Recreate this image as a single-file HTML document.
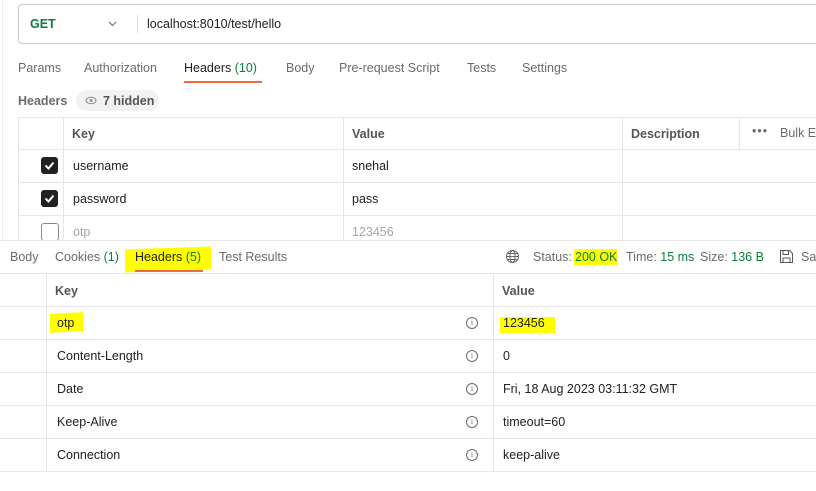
<!DOCTYPE html><html><head><style>
*{margin:0;padding:0;box-sizing:border-box}
body{width:816px;height:491px;overflow:hidden;background:#fff;font-family:"Liberation Sans",sans-serif;font-size:12.5px;color:#212121;position:relative}
.a{position:absolute;white-space:nowrap}
.g{color:#6b6b6b}
.hl{position:absolute;background:#ffff00}
.hline{position:absolute;height:1px;background:#e6e6e6}
.vline{position:absolute;width:1px;background:#e6e6e6}
.cb{position:absolute;width:17px;height:17px;border-radius:3px;background:#212121}
.cb svg{position:absolute;left:2px;top:2px}
.info{position:absolute;width:12px;height:12px;border:1px solid #6b6b6b;border-radius:50%;font-size:8px;text-align:center;line-height:10px;color:#6b6b6b;font-family:"Liberation Serif",serif}
</style></head><body>
<div class="vline" style="left:2px;top:0;height:491px;background:#ececec"></div>
<div class="a" style="left:18px;top:4px;width:820px;height:40px;border:1px solid #c8c8c8;border-radius:4px"></div>
<div class="a" style="left:30px;top:17px;color:#0a7f3a;font-weight:bold">GET</div>
<svg class="a" style="left:108px;top:21px" width="9" height="6"><path d="M1 1L4.5 4.5L8 1" stroke="#6b6b6b" fill="none" stroke-width="1"/></svg>
<div class="vline" style="left:137px;top:15px;height:18px;background:#ddd"></div>
<div class="a" style="left:147px;top:17px">localhost:8010/test/hello</div>

<div class="a g" style="left:18px;top:61px">Params</div>
<div class="a g" style="left:84px;top:61px">Authorization</div>
<div class="a" style="left:184px;top:61px">Headers <span style="color:#0a7f3a">(10)</span></div>
<div class="a" style="left:184px;top:81px;width:78px;height:2px;background:#f26b3a"></div>
<div class="a g" style="left:286px;top:61px">Body</div>
<div class="a g" style="left:339px;top:61px">Pre-request Script</div>
<div class="a g" style="left:467px;top:61px">Tests</div>
<div class="a g" style="left:522px;top:61px">Settings</div>

<div class="a g" style="left:18px;top:94px;font-weight:bold">Headers</div>
<div class="a" style="left:76px;top:90px;width:83px;height:21px;border-radius:11px;background:#f2f2f2"></div>
<svg class="a" style="left:85px;top:96px" width="12" height="9"><ellipse cx="6" cy="4.5" rx="5" ry="3.2" fill="none" stroke="#888"/><circle cx="6" cy="4.5" r="1.4" fill="#888"/></svg>
<div class="a g" style="left:103px;top:94px;font-weight:bold;color:#555">7 hidden</div>

<div class="hline" style="left:18px;top:117px;width:800px"></div>
<div class="hline" style="left:18px;top:149px;width:800px"></div>
<div class="hline" style="left:18px;top:182px;width:800px"></div>
<div class="hline" style="left:18px;top:215px;width:800px"></div>
<div class="vline" style="left:18px;top:117px;height:124px"></div>
<div class="vline" style="left:63px;top:117px;height:124px"></div>
<div class="vline" style="left:343px;top:117px;height:124px"></div>
<div class="vline" style="left:622px;top:117px;height:124px"></div>
<div class="vline" style="left:739px;top:117px;height:33px"></div>
<div class="a" style="left:72px;top:127px;font-weight:bold;color:#555">Key</div>
<div class="a" style="left:352px;top:127px;font-weight:bold;color:#555">Value</div>
<div class="a" style="left:631px;top:127px;font-weight:bold;color:#555">Description</div>
<div class="a g" style="left:752px;top:124px;letter-spacing:1px">•••</div>
<div class="a g" style="left:780px;top:126px">Bulk Edit</div>
<div class="cb" style="left:41px;top:157px"><svg width="13" height="13"><path d="M2.5 6.5L5.5 9.5L10.5 3.5" stroke="#fff" stroke-width="2" fill="none"/></svg></div>
<div class="cb" style="left:41px;top:190px"><svg width="13" height="13"><path d="M2.5 6.5L5.5 9.5L10.5 3.5" stroke="#fff" stroke-width="2" fill="none"/></svg></div>
<div class="a" style="left:41px;top:223px;width:18px;height:18px;border:1px solid #888;border-radius:3px"></div>
<div class="a" style="left:73px;top:159px">username</div>
<div class="a" style="left:352px;top:159px">snehal</div>
<div class="a" style="left:73px;top:192px">password</div>
<div class="a" style="left:352px;top:192px">pass</div>
<div class="a" style="left:73px;top:225px;color:#a6a6a6">otp</div>
<div class="a" style="left:352px;top:225px;color:#a6a6a6">123456</div>

<div class="a" style="left:0;top:240px;width:816px;height:251px;background:#fff;border-top:1px solid #e6e6e6"></div>
<div class="hl" style="left:125px;top:248px;width:86px;height:23px;transform:skewY(-2deg)"></div>
<div class="a g" style="left:10px;top:250px">Body</div>
<div class="a g" style="left:55px;top:250px">Cookies <span style="color:#0a7f3a">(1)</span></div>
<div class="a" style="left:135px;top:250px">Headers <span style="color:#0a7f3a">(5)</span></div>
<div class="a" style="left:135px;top:270px;width:68px;height:2px;background:#f26b3a"></div>
<div class="a g" style="left:219px;top:250px">Test Results</div>
<svg class="a" style="left:505px;top:249px" width="15" height="15"><circle cx="7.5" cy="7.5" r="6" fill="none" stroke="#666"/><ellipse cx="7.5" cy="7.5" rx="2.6" ry="6" fill="none" stroke="#666"/><path d="M1.5 7.5H13.5M2.5 4.5H12.5M2.5 10.5H12.5" stroke="#666"/></svg>
<div class="a g" style="left:533px;top:250px">Status:</div>
<div class="hl" style="left:574px;top:249px;width:43px;height:16px"></div>
<div class="a" style="left:575px;top:250px;color:#0a7f3a">200 OK</div>
<div class="a g" style="left:626px;top:250px">Time: <span style="color:#0a7f3a">15 ms</span></div>
<div class="a g" style="left:700px;top:250px">Size: <span style="color:#0a7f3a">136 B</span></div>
<svg class="a" style="left:779px;top:249px" width="15" height="15"><path d="M1.5 1.5H10.5L13.5 4.5V13.5H1.5Z M4 1.5V5.5H9.5V1.5 M4 13.5V9H11V13.5" fill="none" stroke="#555"/></svg>
<div class="a g" style="left:801px;top:250px">Save</div>

<div class="hline" style="left:0;top:273px;width:816px"></div>
<div class="hline" style="left:0;top:306px;width:816px"></div>
<div class="hline" style="left:0;top:339px;width:816px"></div>
<div class="hline" style="left:0;top:372px;width:816px"></div>
<div class="hline" style="left:0;top:405px;width:816px"></div>
<div class="hline" style="left:0;top:438px;width:816px"></div>
<div class="hline" style="left:0;top:471px;width:816px"></div>
<div class="vline" style="left:46px;top:273px;height:198px"></div>
<div class="vline" style="left:493px;top:273px;height:198px"></div>
<div class="a" style="left:55px;top:284px;font-weight:bold;color:#555">Key</div>
<div class="a" style="left:502px;top:284px;font-weight:bold;color:#555">Value</div>
<div class="hl" style="left:50px;top:313px;width:33px;height:19px;transform:skewY(-3deg)"></div>
<div class="hl" style="left:500px;top:317px;width:55px;height:16px"></div>
<div class="a" style="left:57px;top:316px">otp</div>
<div class="a" style="left:503px;top:316px">123456</div>
<div class="a" style="left:57px;top:349px">Content-Length</div>
<div class="a" style="left:503px;top:349px">0</div>
<div class="a" style="left:57px;top:382px">Date</div>
<div class="a" style="left:503px;top:382px">Fri, 18 Aug 2023 03:11:32 GMT</div>
<div class="a" style="left:57px;top:415px">Keep-Alive</div>
<div class="a" style="left:503px;top:415px">timeout=60</div>
<div class="a" style="left:57px;top:448px">Connection</div>
<div class="a" style="left:503px;top:448px">keep-alive</div>
<div class="info" style="left:466px;top:317px">i</div>
<div class="info" style="left:466px;top:350px">i</div>
<div class="info" style="left:466px;top:383px">i</div>
<div class="info" style="left:466px;top:416px">i</div>
<div class="info" style="left:466px;top:449px">i</div>
</body></html>
